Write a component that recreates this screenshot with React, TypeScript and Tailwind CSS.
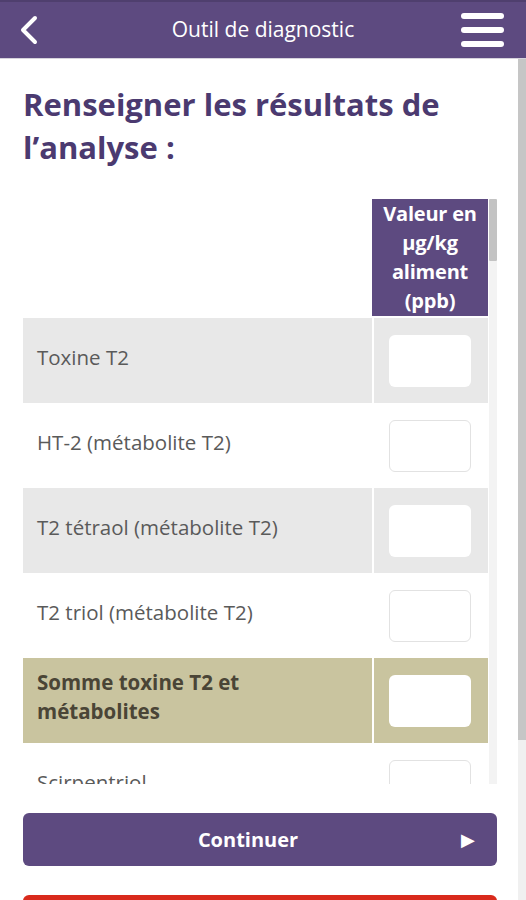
import React from "react";

const rows: { label: React.ReactNode; key: string; kind: "gray" | "white" | "sum" }[] = [
  { key: "a", label: "Toxine T2", kind: "gray" },
  { key: "b", label: "HT-2 (métabolite T2)", kind: "white" },
  { key: "c", label: "T2 tétraol (métabolite T2)", kind: "gray" },
  { key: "d", label: "T2 triol (métabolite T2)", kind: "white" },
  {
    key: "e",
    label: (
      <>
        Somme toxine T2 et
        <br />
        métabolites
      </>
    ),
    kind: "sum",
  },
  { key: "f", label: "Scirpentriol", kind: "white" },
];

function Row({ label, kind }: { label: React.ReactNode; kind: "gray" | "white" | "sum" }) {
  const bg =
    kind === "gray" ? "bg-[#e8e8e8]" : kind === "sum" ? "bg-[#c9c49f]" : "bg-white";
  const text =
    kind === "sum"
      ? "font-bold text-[#4a4536] text-[20.5px] leading-[29px]"
      : "text-[#5a5a5a] text-[20.5px] leading-[28px]";
  const input =
    kind === "white" ? "border border-[#e2e2e2]" : "border border-transparent";
  return (
    <div className={`flex h-[85px] shrink-0 ${bg}`}>
      <div className={`flex-1 flex items-center pl-[14px] pb-[8px] ${text}`}>
        <div>{label}</div>
      </div>
      <div className="w-[2px] bg-white" />
      <div className="w-[114px] flex items-center justify-center pr-[2px]">
        <div className={`w-[82px] h-[52px] rounded-[6px] bg-white ${input}`} />
      </div>
    </div>
  );
}

export default function App() {
  return (
    <div
      className="w-[526px] h-[900px] overflow-hidden bg-white flex flex-col"
      style={{ fontFamily: "'Open Sans', sans-serif" }}
    >
      {/* Header */}
      <div className="h-[59px] shrink-0 bg-[#5d4a80] border-t-2 border-[#4f3f6e] border-b border-b-[#d6d3dc] grid grid-cols-[1fr_auto_1fr] items-center px-[18px]">
        <div className="flex items-center">
          <svg width="22" height="30" viewBox="0 0 22 30">
            <path
              d="M17 3 L5 15 L17 27"
              fill="none"
              stroke="white"
              strokeWidth="4"
              strokeLinecap="round"
              strokeLinejoin="round"
            />
          </svg>
        </div>
        <div className="text-center text-white text-[21px]">Outil de diagnostic</div>
        <div className="flex justify-end">
          <div className="flex flex-col gap-[8px] mr-[4px]">
            <div className="w-[43px] h-[6px] rounded-full bg-white" />
            <div className="w-[43px] h-[6px] rounded-full bg-white" />
            <div className="w-[43px] h-[6px] rounded-full bg-white" />
          </div>
        </div>
      </div>

      {/* Body */}
      <div className="flex flex-1 min-h-0">
        <div className="flex-1 flex flex-col pl-[23px] pr-[21px] pt-[24px]">
          <h1 className="text-[#4b3a70] text-[31px] leading-[43px] font-bold shrink-0">
            Renseigner les résultats de
            <br />
            l’analyse :
          </h1>

          {/* Table with inner scrollbar */}
          <div className="mt-[30px] flex h-[585px] shrink-0">
            <div className="w-[465px] flex flex-col overflow-hidden">
              <div className="flex shrink-0">
                <div className="flex-1" />
                <div className="w-[116px] h-[119px] bg-[#5d4a80] text-white font-bold text-[20px] leading-[29px] text-center border-b-2 border-white tracking-[-0.2px]">
                  Valeur en
                  <br />
                  µg/kg
                  <br />
                  aliment
                  <br />
                  (ppb)
                </div>
              </div>
              {rows.map((r) => (
                <Row key={r.key} label={r.label} kind={r.kind} />
              ))}
            </div>
            <div className="w-[8px] ml-[1px] flex flex-col">
              <div className="h-[62px] bg-[#c3c3c3] rounded-[1px]" />
              <div className="flex-1 bg-[#f3f3f3]" />
            </div>
          </div>

          {/* Buttons */}
          <div className="mt-[29px] h-[53px] shrink-0 rounded-[6px] bg-[#5d4a80] flex items-center relative">
            <div className="flex-1 text-center text-white font-bold text-[20px] pr-[24px]">
              Continuer
            </div>
            <span className="absolute right-[22px] text-white text-[18px]">▶</span>
          </div>
          <div className="mt-[29px] h-[53px] shrink-0 rounded-[6px] bg-[#d92a1c]" />
        </div>

        {/* Page scrollbar */}
        <div className="w-[9px] flex flex-col">
          <div className="h-[681px] bg-[#c6c6c6]" />
          <div className="flex-1 bg-[#f0f0f0]" />
        </div>
      </div>
    </div>
  );
}
